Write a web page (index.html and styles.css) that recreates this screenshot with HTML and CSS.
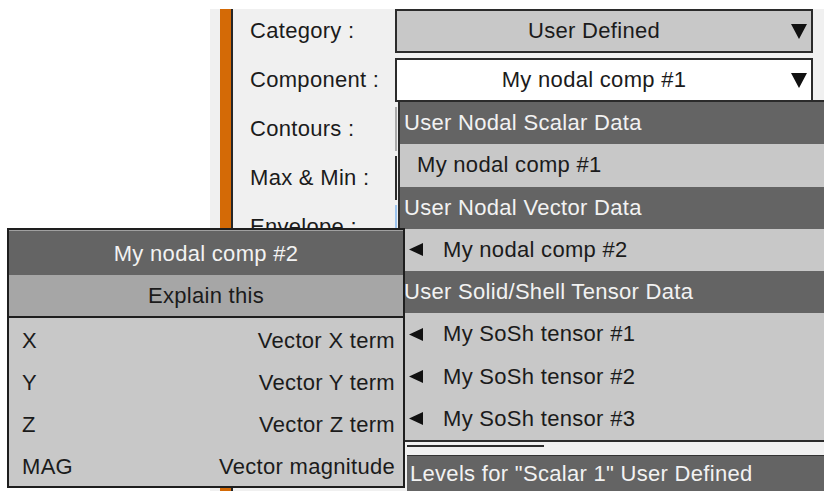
FILE: index.html
```html
<!DOCTYPE html>
<html lang="en">
	<head>
		<title>Contour settings</title>
		<link rel="stylesheet" href="styles.css">
	</head>
	<body>
		<div class="panel">
			<div class="accent"></div>
			<div class="form">
				<div class="fields">
					<label class="label">Category :</label>
					<div class="select select-gray">
						<span class="select-value">User Defined</span>
						<svg class="caret" width="16" height="15" viewBox="0 0 16 15"><polygon points="0,0 16,0 8,15" /></svg>
					</div>
					<label class="label">Component :</label>
					<div class="select select-white">
						<span class="select-value">My nodal comp #1</span>
						<svg class="caret" width="16" height="15" viewBox="0 0 16 15"><polygon points="0,0 16,0 8,15" /></svg>
					</div>
					<label class="label">Contours :</label>
					<div class="control control-contours"></div>
					<label class="label">Max &amp; Min :</label>
					<div class="control control-maxmin"></div>
					<label class="label">Envelope :</label>
					<div class="control control-envelope"></div>
				</div>
				<div class="levels">
					<div class="levels-track"><div class="levels-thumb"></div></div>
					<div class="levels-title">Levels for "Scalar 1" User Defined</div>
				</div>
			</div>
		</div>

		<div class="menu">
			<div class="menu-group">User Nodal Scalar Data</div>
			<div class="menu-item menu-item-plain">My nodal comp #1</div>
			<div class="menu-group">User Nodal Vector Data</div>
			<div class="menu-item"><svg class="sub-arrow" width="14" height="13" viewBox="0 0 14 13"><polygon points="14,0 14,13 0,6.5" /></svg>My nodal comp #2</div>
			<div class="menu-group">User Solid/Shell Tensor Data</div>
			<div class="menu-item"><svg class="sub-arrow" width="14" height="13" viewBox="0 0 14 13"><polygon points="14,0 14,13 0,6.5" /></svg>My SoSh tensor #1</div>
			<div class="menu-item"><svg class="sub-arrow" width="14" height="13" viewBox="0 0 14 13"><polygon points="14,0 14,13 0,6.5" /></svg>My SoSh tensor #2</div>
			<div class="menu-item"><svg class="sub-arrow" width="14" height="13" viewBox="0 0 14 13"><polygon points="14,0 14,13 0,6.5" /></svg>My SoSh tensor #3</div>
		</div>

		<div class="submenu">
			<div class="submenu-title">My nodal comp #2</div>
			<div class="submenu-explain">Explain this</div>
			<div class="submenu-body">
				<div class="submenu-row"><span>X</span><span>Vector X term</span></div>
				<div class="submenu-row"><span>Y</span><span>Vector Y term</span></div>
				<div class="submenu-row"><span>Z</span><span>Vector Z term</span></div>
				<div class="submenu-row"><span>MAG</span><span>Vector magnitude</span></div>
			</div>
		</div>
	</body>
</html>
```

FILE: styles.css
```css
body {
	margin: 0;
	width: 824px;
	height: 491px;
	overflow: hidden;
	background: #fff;
	font-family: "Liberation Sans", Arial, sans-serif;
	font-size: 22px;
	letter-spacing: 0.3px;
	color: #1b1b1b;
}
.panel {
	display: flex;
	margin: 9px 0 0 210px;
	height: 482px;
	background: #f0f0f0;
}
.accent {
	width: 11px;
	margin-left: 10px;
	background: #d46a06;
	border-right: 2px solid #262626;
}
.form {
	flex: 1;
	display: flex;
	flex-direction: column;
	justify-content: space-between;
	padding-left: 17px;
}
.fields {
	display: grid;
	grid-template-columns: 145px 418px;
	grid-auto-rows: 44px;
	row-gap: 5px;
}
.label {
	align-self: center;
}
.select {
	display: flex;
	align-items: center;
	box-sizing: border-box;
	border: 2px solid #2b2b2b;
	padding-right: 4px;
}
.select-gray {
	background: #c8c8c8;
}
.select-white {
	background: #fff;
}
.select-value {
	flex: 1;
	text-align: center;
}
.caret {
	fill: #111;
}
.control {
	border-left: 2px solid #aaa;
}
.control-maxmin {
	border-left-color: #2b2b2b;
}
.control-envelope {
	border-left-color: #9cc4ee;
}
.levels {
	margin-left: 157px;
	height: 49px;
	display: flex;
	flex-direction: column;
}
.levels-track {
	height: 13px;
	padding-top: 3px;
	box-sizing: border-box;
}
.levels-thumb {
	width: 137px;
	height: 2px;
	background: #2b2b2b;
}
.levels-title {
	flex: 1;
	background: #646464;
	border-top: 1px solid #333;
	color: #f2f2f2;
	padding-left: 3px;
	line-height: 35px;
}

/* dropdown opened from the Component field */
.menu {
	position: absolute;
	left: 398px;
	top: 100px;
	width: 430px;
	border: 2px solid #2b2b2b;
	background: #c8c8c8;
}
.menu-group,
.menu-item {
	height: 42.25px;
	display: flex;
	align-items: center;
	white-space: nowrap;
}
.menu-group {
	background: #646464;
	color: #f2f2f2;
	padding-left: 4px;
}
.menu-item {
	padding-left: 9px;
}
.menu-item-plain {
	padding-left: 17px;
}
.sub-arrow {
	fill: #111;
	margin-right: 20px;
}

/* cascaded submenu for the vector component */
.submenu {
	position: absolute;
	left: 7px;
	top: 228px;
	width: 398px;
	height: 260px;
	box-sizing: border-box;
	border: 2px solid #1e1e1e;
	background: #c8c8c8;
}
.submenu-title {
	height: 45px;
	line-height: 45px;
	text-align: center;
	background: #646464;
	border-top: 1px solid #a0a0a0;
	box-sizing: border-box;
	color: #f2f2f2;
}
.submenu-explain {
	height: 41px;
	line-height: 41px;
	text-align: center;
	background: #a6a6a6;
	border-bottom: 2px solid #1e1e1e;
}
.submenu-body {
	padding: 2px 8px 0 13px;
}
.submenu-row {
	display: flex;
	justify-content: space-between;
	align-items: center;
	height: 42px;
}
```
